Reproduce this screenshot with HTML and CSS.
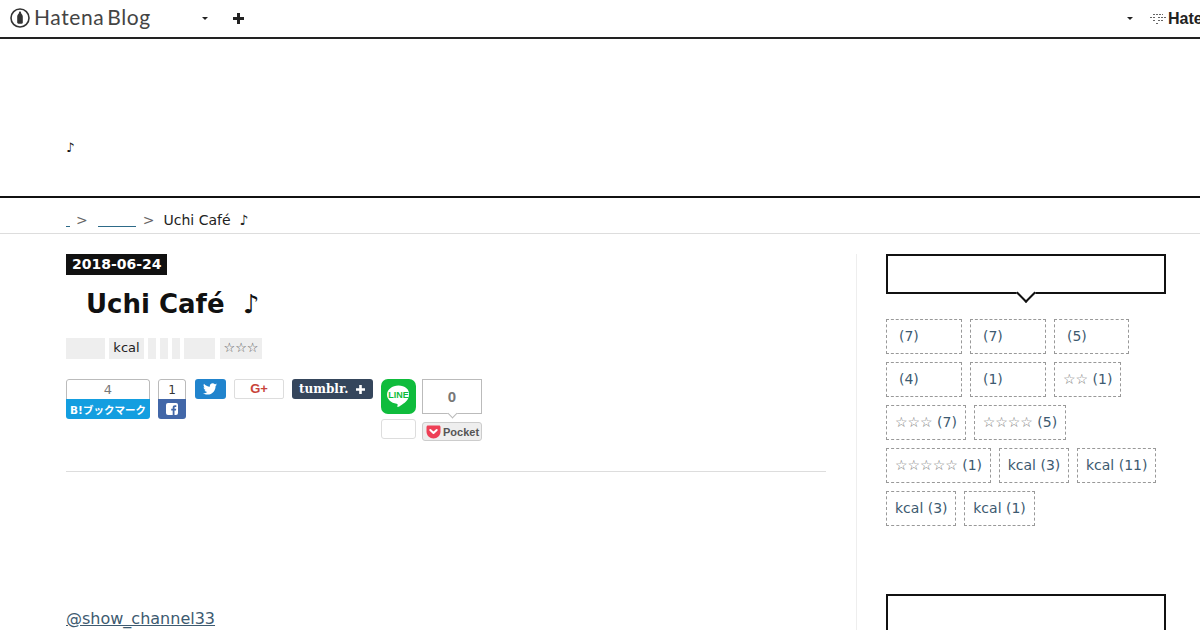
FILE: index.html
```html
<!DOCTYPE html>
<html lang="ja">
<head>
<meta charset="UTF-8">
<title>Uchi Café ♪</title>
<link rel="stylesheet" href="styles.css">
</head>
<body>
<div id="globalheader">
  <a class="logo" href="#">
    <svg class="logo-mark" width="20" height="20" viewBox="0 0 20 20"><circle cx="10" cy="10" r="9" fill="none" stroke="#333" stroke-width="1.6"/><path d="M10 3.500c.8 0 1 .5 1 1.300 0 1 1.800 1.800 1.800 3.700v6c0 .8-.5 1.200-1.200 1.200H8.400c-.7 0-1.200-.4-1.200-1.200v-6c0-1.900 1.800-2.700 1.800-3.700 0-.8.200-1.300 1-1.300z" fill="#333"/></svg>
    <span class="logo-text">Hatena Blog</span>
  </a>
  <span class="caret caret-left"></span>
  <svg class="plus" width="11" height="11" viewBox="0 0 11 11"><path d="M5.500 0v11M0 5.500h11" stroke="#222" stroke-width="3" fill="none"/></svg>
  <span class="spacer"></span>
  <span class="caret caret-right"></span>
  <a class="hatena" href="#">
    <svg class="hatena-mark" width="16" height="12" viewBox="0 0 16 12"><path d="M3 1.500h10M0 4.500h6M8 4.500h8M3 7.500h3M8 7.500h5M6 10.500h3" stroke="#666" stroke-width="1" stroke-dasharray="2 1" fill="none"/></svg>
    <span class="hatena-text">Hatena</span>
  </a>
</div>

<div id="blog-title">
  <p class="blog-description">♪</p>
</div>

<div id="breadcrumb">
  <a class="crumb crumb-dot" href="#">&nbsp;</a>
  <span class="sep">&gt;</span>
  <a class="crumb crumb-cat" href="#">&nbsp;</a>
  <span class="sep sep-second">&gt;</span>
  <span class="crumb-current">Uchi Café &nbsp;♪</span>
</div>

<div id="content">
  <div id="main">
    <time class="date">2018-06-24</time>
    <h1 class="entry-title">Uchi Café &nbsp;♪</h1>
    <div class="categories">
      <span class="cat cat-w39"></span>
      <span class="cat cat-kcal">kcal</span>
      <span class="cat cat-w8"></span>
      <span class="cat cat-w8"></span>
      <span class="cat cat-w8"></span>
      <span class="cat cat-w31"></span>
      <span class="cat cat-stars">☆☆☆</span>
    </div>
    <div class="social">
      <div class="btn-count hatebu">
        <span class="count">4</span>
        <span class="label">B!ブックマーク</span>
      </div>
      <div class="btn-count fb">
        <span class="count">1</span>
        <span class="label">
          <svg width="14" height="14" viewBox="0 0 14 14"><rect x="1" y="1" width="12" height="12" rx="2" fill="#fff"/><path d="M9.500 13V8.500h1.500l.2-1.800H9.500V5.700c0-.5.2-.8.900-.8h.9V3.300c-.2 0-.7-.1-1.300-.1-1.400 0-2.300.8-2.300 2.300v1.200H6.200v1.800h1.500V13z" fill="#4267a8"/></svg>
        </span>
      </div>
      <a class="btn-tw" href="#">
        <svg width="14" height="12" viewBox="0 0 24 20"><path d="M24 2.400c-.9.400-1.800.7-2.800.8 1-.6 1.800-1.600 2.200-2.700-1 .6-2 1-3.100 1.200C19.300.6 18 0 16.600 0c-2.700 0-4.900 2.200-4.900 4.900 0 .4 0 .8.100 1.100C7.700 5.800 4.100 3.900 1.700.9c-.4.700-.7 1.600-.7 2.500 0 1.700.9 3.200 2.200 4.100-.8 0-1.600-.2-2.200-.6v.1c0 2.400 1.700 4.400 3.900 4.800-.4.100-.8.200-1.300.2-.3 0-.6 0-.9-.1.600 2 2.400 3.400 4.600 3.400-1.700 1.300-3.800 2.100-6.100 2.100-.4 0-.8 0-1.200-.1 2.200 1.400 4.800 2.200 7.500 2.200 9.100 0 14-7.500 14-14v-.6c1-.7 1.800-1.600 2.500-2.500z" fill="#fff"/></svg>
      </a>
      <a class="btn-gp" href="#">G+</a>
      <a class="btn-tumblr" href="#">
        <span class="tumblr-name">tumblr.</span>
        <svg width="9" height="9" viewBox="0 0 9 9"><path d="M4.500 0v9M0 4.500h9" stroke="#fff" stroke-width="2.600" fill="none"/></svg>
      </a>
      <div class="line-col">
        <a class="btn-line" href="#">
          <svg width="25" height="25" viewBox="0 0 24 24"><path d="M12 1.500C5.900 1.500 1 5.400 1 10.300c0 4.300 3.900 7.900 9.200 8.600.4.100.8.200.9.500.1.300.1.700 0 1l-.2.900c0 .3-.2 1 .9.600 1-.4 5.700-3.300 7.800-5.700 1.500-1.500 2.400-3.500 2.400-5.700C23 5.400 18.100 1.500 12 1.500z" fill="#fff"/></svg>
          <span class="line-text">LINE</span>
        </a>
        <div class="line-count"></div>
      </div>
      <div class="pocket-col">
        <div class="pocket-count">0</div>
        <a class="btn-pocket" href="#">
          <svg width="15" height="14" viewBox="0 0 15 14"><path d="M2 .5h11c.9 0 1.500.6 1.500 1.500v4.500c0 4-3.200 7-7 7s-7-3-7-7V2C.5 1.100 1.100.5 2 .5z" fill="#ee4056"/><path d="M4.300 5l3.200 3 3.200-3" fill="none" stroke="#fff" stroke-width="2" stroke-linecap="round" stroke-linejoin="round"/></svg>
          <span>Pocket</span>
        </a>
      </div>
    </div>
    <div class="entry-body">
      <a class="twitter-name" href="#">@show_channel33</a>
    </div>
  </div>

  <div id="sidebar">
    <div class="module-title"></div>
    <div class="tags">
      <a class="tag tag-w76" href="#">(7)</a>
      <a class="tag tag-w76" href="#">(7)</a>
      <a class="tag tag-w75" href="#">(5)</a>
      <a class="tag tag-w76" href="#">(4)</a>
      <a class="tag tag-w76" href="#">(1)</a>
      <a class="tag" href="#"><span class="stars">☆☆</span> (1)</a>
      <a class="tag" href="#"><span class="stars">☆☆☆</span> (7)</a>
      <a class="tag" href="#"><span class="stars">☆☆☆☆</span> (5)</a>
      <a class="tag" href="#"><span class="stars">☆☆☆☆☆</span> (1)</a>
      <a class="tag" href="#">kcal (3)</a>
      <a class="tag" href="#">kcal (11)</a>
      <a class="tag" href="#">kcal (3)</a>
      <a class="tag" href="#">kcal (1)</a>
    </div>
    <div class="module-title next"></div>
  </div>
</div>
</body>
</html>
```
FILE: styles.css
```css
html, body {
    margin: 0;
    padding: 0;
    height: 630px;
    overflow: hidden;
}
body {
    font-family: "DejaVu Sans", "Noto Sans CJK JP", sans-serif;
    font-size: 14px;
    color: #111;
    background-color: #fff;
}
a {
    text-decoration: none;
}

/* global header */
#globalheader {
    display: flex;
    align-items: center;
    height: 37px;
    padding-left: 10px;
    border-bottom: 2px solid #222;
    overflow: hidden;
}
.logo {
    display: flex;
    align-items: center;
    gap: 4px;
    margin-bottom: 1px;
    color: #444;
}
.logo-mark {
    flex: none;
}
.logo-text {
    width: 118px;
    padding-bottom: 2px;
    font-family: "Lato", sans-serif;
    font-weight: 400;
    font-size: 21px;
    line-height: 20px;
    letter-spacing: .6px;
    word-spacing: -3px;
    white-space: nowrap;
}
.caret {
    width: 0;
    height: 0;
    border-style: solid;
    border-width: 3px 3px 0 3px;
    border-color: #222 transparent transparent transparent;
}
.caret-left {
    margin-left: 50px;
}
.plus {
    margin-left: 25px;
}
.spacer {
    flex: 1;
}
.caret-right {
    margin-right: 17px;
}
.hatena {
    display: flex;
    align-items: center;
    gap: 2px;
    width: 50px;
    flex: none;
    overflow: hidden;
    color: #222;
    font-family: "Liberation Sans", sans-serif;
    font-size: 16px;
    font-weight: bold;
}
.hatena-mark {
    flex: none;
}

/* blog title */
#blog-title {
    height: 157px;
    padding-left: 66px;
    border-bottom: 2px solid #111;
}
.blog-description {
    margin: 0;
    padding-top: 100px;
    font-size: 13px;
    line-height: 18px;
}

/* breadcrumb */
#breadcrumb {
    display: flex;
    align-items: center;
    height: 36px;
    padding: 9px 0 0 66px;
    box-sizing: border-box;
    border-bottom: 1px solid #ddd;
    font-size: 14px;
    color: #222;
    white-space: pre;
}
.crumb {
    color: #2d6a88;
    text-decoration: underline;
}
.crumb-dot {
    width: 4px;
    overflow: hidden;
}
.crumb-cat {
    width: 38px;
    overflow: hidden;
    letter-spacing: 34px;
}
.sep {
    margin: 0 10px 0 6px;
    color: #666;
}
.sep-second {
    margin: 0 9px 0 7px;
}

/* layout */
#content {
    display: flex;
    padding: 20px 0 0 66px;
}
#main {
    width: 760px;
    flex: none;
}
#sidebar {
    width: 280px;
    margin-left: 30px;
    padding-left: 29px;
    border-left: 1px solid #eee;
    flex: none;
}

/* entry */
.date {
    display: inline-block;
    padding: 0 5px 0 6px;
    height: 21px;
    line-height: 20px;
    background-color: #111;
    color: #fff;
    font-size: 14px;
    font-weight: bold;
    vertical-align: top;
}
.entry-title {
    margin: 12px 0 0;
    padding-left: 20px;
    font-size: 26px;
    line-height: 34px;
    font-weight: bold;
    color: #111;
}
.categories {
    display: flex;
    gap: 4px;
    margin-top: 17px;
    height: 21px;
}
.cat {
    display: block;
    height: 21px;
    line-height: 20px;
    background-color: #eee;
    font-size: 13px;
    color: #222;
    text-align: center;
}
.cat-w39 {
    width: 39px;
}
.cat-kcal {
    width: 35px;
}
.cat-w8 {
    width: 8px;
}
.cat-w31 {
    width: 31px;
}
.cat-stars {
    width: 42px;
    margin-left: 1px;
    color: #555;
    white-space: nowrap;
}

/* share buttons */
.social {
    display: flex;
    align-items: flex-start;
    margin-top: 20px;
    height: 92px;
    border-bottom: 1px solid #ddd;
}
.btn-count {
    display: flex;
    flex-direction: column;
    height: 40px;
    margin-right: 8px;
    box-sizing: border-box;
    border-radius: 3px;
    overflow: hidden;
}
.btn-count .count {
    display: block;
    height: 20px;
    line-height: 20px;
    box-sizing: border-box;
    text-align: center;
    font-size: 13px;
    border-width: 1px 1px 0;
    border-style: solid;
    border-color: #bbb;
    border-radius: 3px 3px 0 0;
}
.btn-count .label {
    display: flex;
    align-items: center;
    justify-content: center;
    height: 20px;
    color: #fff;
}
.hatebu {
    width: 84px;
}
.hatebu .count {
    color: #777;
}
.hatebu .label {
    background-color: #139ee0;
    font-size: 10.5px;
    font-weight: bold;
    white-space: nowrap;
}
.fb {
    width: 28px;
    margin-right: 9px;
}
.fb .count {
    color: #333;
    font-size: 12px;
}
.fb .label {
    background-color: #4267a8;
}
.btn-tw {
    display: flex;
    align-items: center;
    justify-content: center;
    width: 31px;
    height: 20px;
    margin-right: 8px;
    padding-right: 2px;
    box-sizing: border-box;
    background-color: #2184cd;
    border-radius: 3px;
}
.btn-gp {
    display: block;
    width: 50px;
    height: 20px;
    margin-right: 8px;
    box-sizing: border-box;
    border: 1px solid #ddd;
    border-radius: 2px;
    color: #c8443a;
    font-family: "Liberation Sans", sans-serif;
    font-size: 13px;
    font-weight: bold;
    line-height: 18px;
    text-align: center;
}
.btn-tumblr {
    display: flex;
    align-items: center;
    justify-content: space-between;
    width: 81px;
    height: 20px;
    margin-right: 8px;
    padding: 0 8px 0 7px;
    box-sizing: border-box;
    background-color: #35465c;
    border-radius: 3px;
    color: #fff;
}
.tumblr-name {
    font-family: "DejaVu Serif", serif;
    font-size: 12px;
    font-weight: bold;
}
.line-col {
    width: 35px;
    margin-right: 6px;
}
.btn-line {
    display: flex;
    align-items: center;
    justify-content: center;
    position: relative;
    width: 35px;
    height: 35px;
    background-color: #0fbc3c;
    border-radius: 7px;
}
.line-text {
    position: absolute;
    left: 0;
    right: 0;
    top: 11px;
    text-align: center;
    color: #0fbc3c;
    font-family: "Liberation Sans", sans-serif;
    font-size: 9px;
    font-weight: bold;
}
.line-count {
    height: 20px;
    margin-top: 5px;
    border: 1px solid #ddd;
    border-radius: 3px;
    box-sizing: border-box;
}
.pocket-col {
    width: 60px;
}
.pocket-count {
    position: relative;
    height: 35px;
    box-sizing: border-box;
    border: 1px solid #bbb;
    color: #777;
    font-family: "Liberation Sans", sans-serif;
    font-size: 15px;
    font-weight: bold;
    line-height: 33px;
    text-align: center;
}
.pocket-count::after {
    content: "";
    position: absolute;
    left: 26px;
    bottom: -4px;
    width: 6px;
    height: 6px;
    background-color: #fff;
    border-right: 1px solid #bbb;
    border-bottom: 1px solid #bbb;
    transform: rotate(45deg);
}
.btn-pocket {
    display: flex;
    align-items: center;
    gap: 2px;
    height: 19px;
    margin-top: 8px;
    padding-left: 3px;
    box-sizing: border-box;
    background-color: #eee;
    border: 1px solid #ccc;
    border-radius: 3px;
    color: #555;
    font-family: "Liberation Sans", sans-serif;
    font-size: 11px;
    font-weight: bold;
}
.entry-body {
    padding-top: 137px;
}
.twitter-name {
    color: #3d5a70;
    font-size: 16px;
    line-height: 20px;
    text-decoration: underline;
}

/* sidebar */
.module-title {
    position: relative;
    height: 40px;
    box-sizing: border-box;
    border: 2px solid #111;
}
.module-title::after {
    content: "";
    position: absolute;
    left: 131px;
    bottom: -8px;
    width: 14px;
    height: 14px;
    background-color: #fff;
    border-right: 2px solid #111;
    border-bottom: 2px solid #111;
    box-sizing: border-box;
    transform: rotate(45deg);
}
.tags {
    display: flex;
    flex-wrap: wrap;
    gap: 8px;
    margin-top: 25px;
}
.tag {
    display: block;
    height: 35px;
    line-height: 33px;
    padding: 0 7.7px 0 8px;
    box-sizing: border-box;
    border: 1px dashed #999;
    color: #3d5a70;
    font-size: 14px;
    white-space: nowrap;
}
.stars {
    color: #777;
}
.tag-w76 {
    width: 76px;
    padding-left: 12px;
}
.tag-w75 {
    width: 75px;
    padding-left: 12px;
}
.next {
    margin-top: 68px;
}
```
